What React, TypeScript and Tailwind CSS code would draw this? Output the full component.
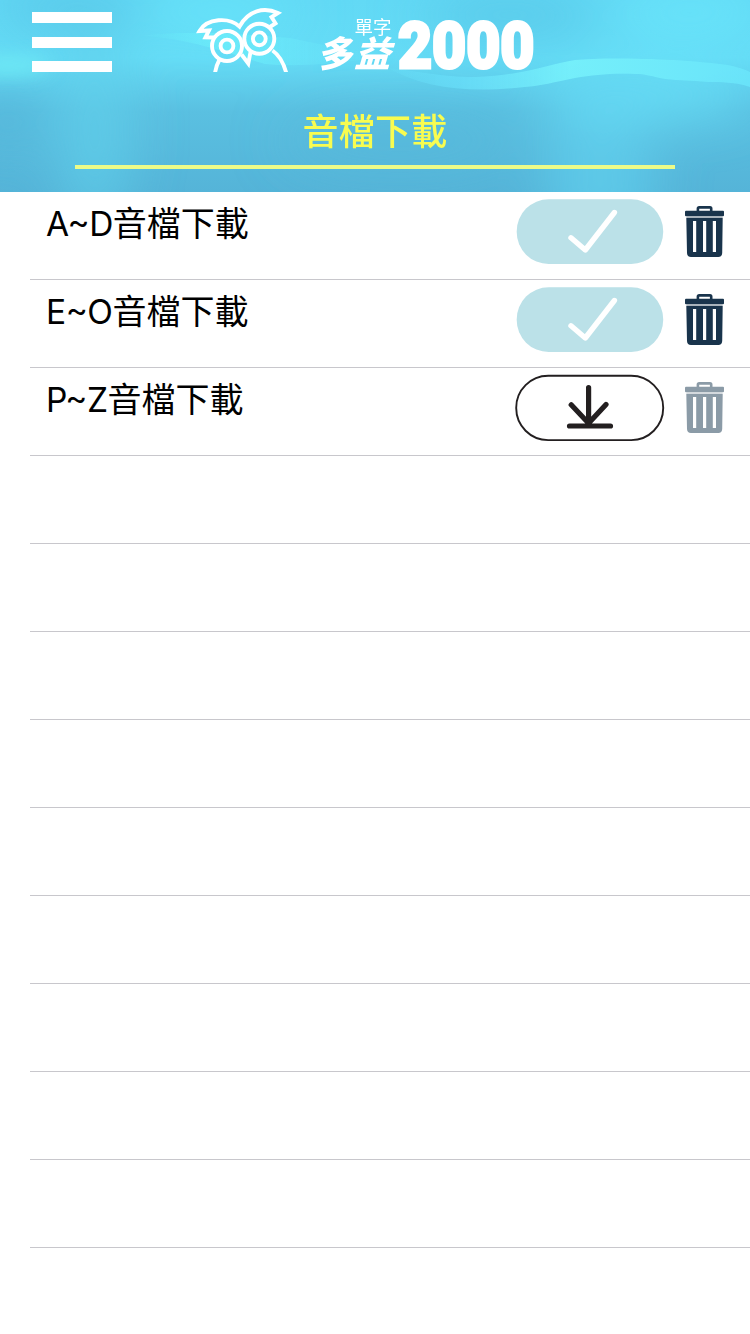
type RowStatus = "done" | "available";

const DOWNLOADS: { range: string; status: RowStatus }[] = [
  { range: "A~D", status: "done" },
  { range: "E~O", status: "done" },
  { range: "P~Z", status: "available" },
];

const EMPTY_ROWS = 9;

function HeaderBackdrop() {
  return (
    <svg
      aria-hidden
      viewBox="0 0 750 192"
      preserveAspectRatio="none"
      className="absolute inset-0 h-full w-full"
    >
      <defs>
        <linearGradient id="water" x1="0" y1="0" x2="0" y2="1">
          <stop offset="0" stopColor="#62d9f5" />
          <stop offset="0.3" stopColor="#65dcf6" />
          <stop offset="0.58" stopColor="#5ac0e1" />
          <stop offset="1" stopColor="#55b4d8" />
        </linearGradient>
        <filter id="soft" x="-100%" y="-100%" width="300%" height="300%">
          <feGaussianBlur stdDeviation="26" />
        </filter>
        <filter id="softer" x="-50%" y="-100%" width="200%" height="300%">
          <feGaussianBlur stdDeviation="9" />
        </filter>
        <linearGradient id="wave" x1="0" y1="0" x2="1" y2="0">
          <stop offset="0" stopColor="#6be3fb" stopOpacity="0.2" />
          <stop offset="0.2" stopColor="#68def9" stopOpacity="0.9" />
          <stop offset="0.5" stopColor="#79f4fc" />
          <stop offset="1" stopColor="#6be6fb" />
        </linearGradient>
        <linearGradient id="waveLeft" x1="0" y1="0" x2="1" y2="0">
          <stop offset="0" stopColor="#6df0fb" stopOpacity="0" />
          <stop offset="0.35" stopColor="#6df0fb" stopOpacity="0.7" />
          <stop offset="1" stopColor="#66dcf7" stopOpacity="0.3" />
        </linearGradient>
      </defs>
      <rect width="750" height="192" fill="url(#water)" />
      <g filter="url(#soft)">
        <ellipse cx="95" cy="130" rx="35" ry="100" fill="#60d0eb" opacity="0.7" />
        <ellipse cx="5" cy="122" rx="30" ry="28" fill="#54b4d8" opacity="0.8" />
        <ellipse cx="70" cy="8" rx="75" ry="18" fill="#57c3e5" />
        <ellipse cx="510" cy="15" rx="90" ry="22" fill="#59c8e8" />
        <ellipse cx="220" cy="12" rx="80" ry="18" fill="#68e6fb" />
        <ellipse cx="690" cy="12" rx="80" ry="18" fill="#6ae8fc" />
        <ellipse cx="645" cy="95" rx="110" ry="20" fill="#68e2f9" />
        <ellipse cx="600" cy="180" rx="55" ry="80" fill="#62d3ef" opacity="0.65" />
        <ellipse cx="400" cy="140" rx="120" ry="30" fill="#55b7d9" opacity="0.5" />
      </g>
      <ellipse cx="8" cy="66" rx="42" ry="9" fill="#6eeaf5" filter="url(#softer)" />
      <path
        d="M138 36 C190 30 235 33 290 38 C330 46 360 52 390 56 C350 62 300 68 265 64 C225 52 185 37 138 36Z"
        fill="url(#waveLeft)"
      />
      <path
        d="M388 68 C420 71 440 77 475 77 C520 76 550 64 575 60 C600 57 680 58 728 65 Q742 68 750 72 L750 87 C735 82 720 82 708 82 C690 80 680 81 665 79 C650 76 645 74 635 74 C610 73 595 75 575 78 C555 82 540 86 525 87 C470 93 425 89 388 68Z"
        fill="url(#wave)"
        opacity="0.8"
      />
    </svg>
  );
}

function OwlLogo() {
  return (
    <svg
      viewBox="192 4 100 68"
      className="ml-20 h-[68px] w-[100px]"
      fill="none"
      stroke="#fff"
      strokeWidth="3.9"
    >
      <circle cx="227" cy="46" r="15" />
      <circle cx="227" cy="46" r="6.4" />
      <circle cx="259.3" cy="38.8" r="15" />
      <circle cx="259.3" cy="38.8" r="6.4" />
      <path d="M214.5 37.5 L205.5 37.3 L209 30.5 L199.5 31 C207 18 229 17 239.5 26.5 C248 10.5 264 6.5 278 13 L271.5 17 L275.5 23.3 L269 27.5" />
      <path d="M241.5 54.5 L248.3 63.5 L250.5 52" />
      <path d="M219.5 59.5 Q216 66 215 73" />
      <path d="M272.5 50.5 Q282 57 286.3 73" />
    </svg>
  );
}

function Wordmark() {
  return (
    <svg viewBox="316 12 226 66" className="ml-6 h-[66px] w-[226px] overflow-visible" fill="#fff">
      <text
        x="354.5"
        y="33.5"
        fontSize="18.5"
        fontWeight="400"
        className="font-['Noto_Sans_CJK_TC',sans-serif]"
      >
        單字
      </text>
      <text
        transform="translate(316 67) skewX(-16)"
        fontSize="36"
        fontWeight="900"
        textLength="74"
        className="font-['Noto_Sans_CJK_TC',sans-serif]"
      >
        多益
      </text>
      <text
        x="398"
        y="68.3"
        fontSize="64.5"
        fontWeight="900"
        stroke="#fff"
        strokeWidth="3"
        textLength="136.5"
        lengthAdjust="spacingAndGlyphs"
        className="font-[Roboto,sans-serif]"
      >
        2000
      </text>
    </svg>
  );
}

function MenuButton() {
  return (
    <button type="button" aria-label="Menu" className="flex h-[60px] w-20 flex-col justify-between">
      <span className="h-[11px] w-full bg-white" />
      <span className="h-[11px] w-full bg-white" />
      <span className="h-[11px] w-full bg-white" />
    </button>
  );
}

function Header() {
  return (
    <header className="relative h-48 overflow-hidden">
      <HeaderBackdrop />
      <div className="relative flex h-full flex-col">
        <div className="flex h-[100px] items-start pl-8">
          <div className="pt-3">
            <MenuButton />
          </div>
          <div className="flex pt-1">
            <OwlLogo />
            <div className="pt-2">
              <Wordmark />
            </div>
          </div>
        </div>
        <div className="mx-[75px] flex h-[69px] justify-center border-b-4 border-[#ecfb88] pt-[3px]">
          <h1 className="font-['Noto_Sans_CJK_TC',sans-serif] text-[36px] leading-[52px] font-medium tracking-[0.3px] text-[#f8fc50]">
            音檔下載
          </h1>
        </div>
      </div>
    </header>
  );
}

function CheckPill() {
  return (
    <svg viewBox="0 0 150 68" className="h-[68px] w-[150px]" fill="none">
      <rect x="1.7" y="1.2" width="146.5" height="64.8" rx="32" fill="#bbe1e8" />
      <path
        d="M56 39.8 L70.3 52 L99.4 14.5"
        stroke="#fff"
        strokeWidth="5.4"
        strokeLinecap="round"
        strokeLinejoin="round"
      />
    </svg>
  );
}

function DownloadPill() {
  return (
    <svg
      viewBox="0 0 150 68"
      className="h-[68px] w-[150px]"
      fill="none"
      stroke="#231f20"
      strokeLinecap="round"
      strokeLinejoin="round"
    >
      <rect x="1.2" y="1.8" width="147" height="64.3" rx="32" strokeWidth="1.9" />
      <path d="M73.6 13.5 V49.3 M56.2 30.8 L73.6 49.3 L91 30.5 M54.5 52 H95.5" strokeWidth="5.2" />
    </svg>
  );
}

function TrashIcon({ color }: { color: string }) {
  return (
    <svg viewBox="0 0 40 52" className="h-[52px] w-10">
      <path d="M12.9 5.5 V2.6 Q12.9 1.4 14.1 1.4 H25 Q26.2 1.4 26.2 2.6 V5.5" fill="none" stroke={color} strokeWidth="2.6" />
      <rect x="0" y="4.8" width="39" height="5.4" rx="1" fill={color} />
      <rect x="1.5" y="10.2" width="36" height="1.6" fill={color} opacity="0.2" />
      <path
        fill={color}
        fillRule="evenodd"
        d="M1.3 11.8 H37.7 L37.2 47 Q37 51 33.3 51 H6 Q2.2 51 2 47Z M8 15 V46 H11.2 V15Z M18 15 V46 H21.2 V15Z M27.8 15 V46 H31 V15Z"
      />
    </svg>
  );
}

function DownloadRow({ range, status }: { range: string; status: RowStatus }) {
  const done = status === "done";
  return (
    <li className="ml-[30px] flex h-[88px] border-b border-[#c8c7cc] pl-4">
      <span className="flex-1 pt-[3px] font-['Noto_Sans_CJK_TC',sans-serif] text-[34px] leading-[54px] text-black">
        <span className="font-[Inter,sans-serif] text-[33.5px] tracking-[-0.5px] [font-feature-settings:'case']">
          {range}
        </span>
        音檔下載
      </span>
      <button type="button" aria-label="Download" className="mt-1.5 h-[68px]">
        {done ? <CheckPill /> : <DownloadPill />}
      </button>
      <button type="button" aria-label="Delete" className="mt-3.5 mr-[25px] ml-5 h-[52px]">
        <TrashIcon color={done ? "#19344c" : "#8b9ba7"} />
      </button>
    </li>
  );
}

export default function App() {
  return (
    <div className="h-[1334px] w-[750px] overflow-hidden bg-white">
      <Header />
      <ul>
        {DOWNLOADS.map((item) => (
          <DownloadRow key={item.range} range={item.range} status={item.status} />
        ))}
        {Array.from({ length: EMPTY_ROWS }, (_, i) => (
          <li key={i} className="ml-[30px] h-[88px] border-b border-[#c8c7cc]" />
        ))}
      </ul>
    </div>
  );
}
